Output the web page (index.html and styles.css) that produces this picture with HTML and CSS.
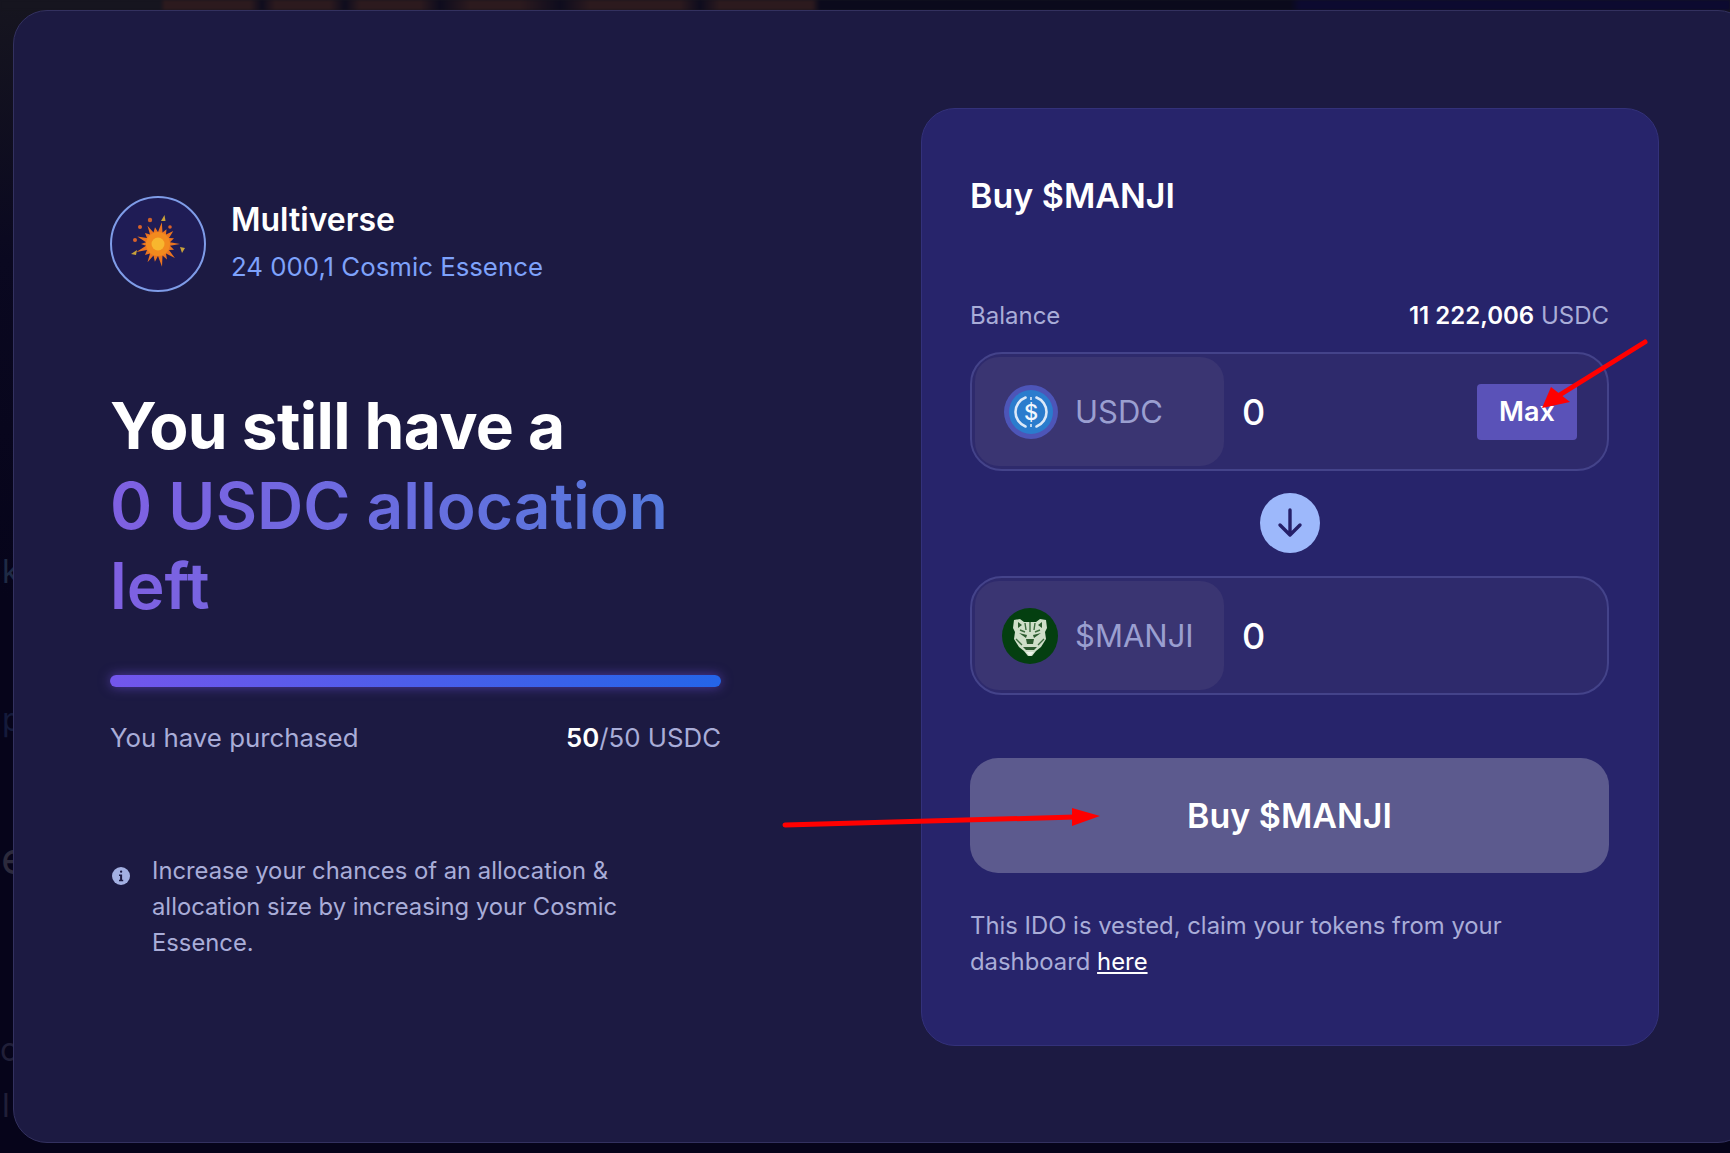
FILE: index.html
```html
<!DOCTYPE html>
<html lang="en">
<head>
    <meta charset="UTF-8">
    <meta name="viewport" content="width=device-width, initial-scale=1.0">
    <title>Buy $MANJI</title>
    <link rel="stylesheet" href="styles.css">
</head>
<body>
    <!-- page behind the modal, only its edges show -->
    <div class="backdrop">
        <div class="backdrop-top"></div>
        <span class="ghost ghost-k">k</span>
        <span class="ghost ghost-p">p</span>
        <span class="ghost ghost-e">e</span>
        <span class="ghost ghost-o">o</span>
        <span class="ghost ghost-l">l</span>
    </div>

    <div class="card">
        <div class="info">
            <div class="tier">
                <div class="tier-icon">
                    <svg class="sun" viewBox="-30 -30 60 60" width="60" height="60">
                        <polygon fill="#ea7420" points="22,0 12,1.7 16,5.8 11,6 16.9,14.1 8,9.5 9,15.6 4.5,11.5 4,22.7 0,12 -3.1,17.7 -4.5,11.5 -10.5,18.2 -8,9.5 -13,10.9 -11,6 -21.6,7.9 -12,1.7 -17,0 -12,-1.7 -20.7,-7.5 -11,-6 -13,-10.9 -8,-9.5 -10.5,-18.2 -4.5,-11.5 -3,-16.7 0,-12 3.8,-21.7 4.5,-11.5 8.5,-14.7 8,-9.5 15.3,-12.9 11,-6 16,-5.8 12,-1.7"/>
                        <circle r="12" fill="#f28a1e"/>
                        <circle r="6.5" fill="#f8b62e"/>
                        <circle cx="-8" cy="-24" r="2.2" fill="#c9602c"/>
                        <circle cx="-18" cy="-17" r="2" fill="#d9622a"/>
                        <circle cx="-23" cy="-4" r="2" fill="#d9622a"/>
                        <circle cx="12" cy="-17" r="1.8" fill="#d9622a"/>
                        <path d="M3 -23l3.5 -6 1 6z" fill="#c9a23a"/>
                        <path d="M-27 10l6 -4 -1 5z" fill="#c9a23a"/>
                        <path d="M22 3l5 1 -3 5z" fill="#c9a23a"/>
                    </svg>
                </div>
                <div class="tier-text">
                    <div class="tier-name">Multiverse</div>
                    <div class="tier-points">24 000,1 Cosmic Essence</div>
                </div>
            </div>

            <h1 class="headline">
                You still have a<br>
                <span class="accent">0 USDC allocation<br>left</span>
            </h1>

            <div class="progress"></div>
            <div class="progress-row">
                <span>You have purchased</span>
                <span><b>50</b>/50 USDC</span>
            </div>

            <div class="hint">
                <svg class="hint-icon" viewBox="0 0 18 18" width="18" height="18">
                    <circle cx="9" cy="9" r="9" fill="#a3b0e2"/>
                    <rect x="8" y="3.5" width="2.2" height="2.2" rx="1" fill="#1c1a42"/>
                    <path d="M7 7.6h3.1v5.2h1.1v1.4H7v-1.4h1.1V9H7z" fill="#1c1a42"/>
                </svg>
                <p>Increase your chances of an allocation &amp; allocation size by increasing your Cosmic Essence.</p>
            </div>
        </div>

        <div class="panel">
            <h2>Buy $MANJI</h2>

            <div class="balance">
                <span>Balance</span>
                <span><b>11 222,006</b> USDC</span>
            </div>

            <div class="field">
                <div class="token">
                    <svg viewBox="0 0 54 54" width="54" height="54">
                        <circle cx="27" cy="27" r="27" fill="#4d55b8"/>
                        <circle cx="27" cy="27" r="22" fill="#2b7ccd"/>
                        <path d="M21.5 12.5a15.5 15.5 0 0 0 0 29M32.5 12.5a15.5 15.5 0 0 1 0 29" fill="none" stroke="#dce9f8" stroke-width="2.6" stroke-linecap="round"/>
                        <path d="M27 12v3M27 39v3" stroke="#dce9f8" stroke-width="1.6"/>
                        <text x="27" y="34.5" text-anchor="middle" class="coin-sign">$</text>
                    </svg>
                    <span>USDC</span>
                </div>
                <span class="amount">0</span>
                <button class="max">Max</button>
            </div>

            <div class="swap">
                <svg viewBox="0 0 60 60" width="60" height="60">
                    <circle cx="30" cy="30" r="30" fill="#9db8fb"/>
                    <path d="M30 17v24M20 32l10 10 10-10" fill="none" stroke="#251f68" stroke-width="3.4" stroke-linecap="round" stroke-linejoin="round"/>
                </svg>
            </div>

            <div class="field">
                <div class="token">
                    <svg class="tiger" viewBox="0 0 56 56" width="56" height="56">
                        <circle cx="28" cy="28" r="28" fill="#043f10"/>
                        <path d="M12 12l6-1 4 3h12l4-3 6 1 1 8-2 4 1 7-5 8-5 4-4 5h-4l-4-5-5-4-5-8 1-7-2-4z" fill="#cfdfc9"/>
                        <path d="M16 14l4 3-4 3zM40 14l-4 3 4 3zM17 25l8 2-1 3zM39 25l-8 2 1 3zM24 31h8l-1 5h-6zM21 39h14l-3 3h-8z" fill="#2b5a2e"/>
                        <path d="M28 14v10M23 15l1 7M33 15l-1 7M14 31l6 6M42 31l-6 6M18 22l5 2M38 22l-5 2" stroke="#3d6b3f" stroke-width="1.4"/>
                        <path d="M24 44h8l-4 4z" fill="#eef5ea"/>
                    </svg>
                    <span>$MANJI</span>
                </div>
                <span class="amount">0</span>
            </div>

            <button class="buy">Buy $MANJI</button>

            <p class="note">This IDO is vested, claim your tokens from your dashboard <a href="#">here</a></p>
        </div>
    </div>

    <!-- red annotation arrows from the screenshot -->
    <svg class="annotation" viewBox="0 0 1730 1153" width="1730" height="1153">
        <path d="M1645 342L1558 396" stroke="#f00" stroke-width="5" stroke-linecap="round"/>
        <polygon points="1542,408 1551,387 1570,402" fill="#f00"/>
        <path d="M785 825L1075 817" stroke="#f00" stroke-width="5" stroke-linecap="round"/>
        <polygon points="1100,816 1072,808 1072,826" fill="#f00"/>
    </svg>
</body>
</html>
```

FILE: styles.css
```css
html, body {
    height: 100%;
}

body {
    margin: 0;
    overflow: hidden;
    background: linear-gradient(180deg, #16151f 0, #0a0820 260px, #06041a 600px);
    font-family: Inter, "Liberation Sans", sans-serif;
    color: #a9add8;
}

.backdrop {
    position: absolute;
    top: 0;
    left: 0;
    width: 100%;
    height: 100%;
    overflow: hidden;
}

.backdrop-top {
    height: 10px;
    filter: blur(1px);
    background: linear-gradient(90deg,
        #16151f 0, #16151f 160px,
        #2c1a1e 165px, #2c1a1e 250px, #0e0c1e 262px, #2c1a1e 275px, #2c1a1e 330px,
        #0e0c1e 345px, #2c1a1e 360px, #2c1a1e 420px, #0e0c1e 440px, #2c1a1e 470px, #2c1a1e 520px,
        #0e0c1e 560px, #2c1a1e 590px, #2c1a1e 680px, #0e0c1e 700px, #2c1a1e 720px, #2c1a1e 812px,
        #0b0a1c 820px, #0b0a1c 1290px, #0c0a30 1300px, #0c0a30 100%);
}

.ghost {
    position: absolute;
    left: 2px;
    font-size: 32px;
    line-height: 40px;
    color: #1e2a44;
}

.ghost-k { top: 552px; }
.ghost-p { top: 700px; color: #141a3a; }
.ghost-e { top: 838px; left: 1px; font-size: 44px; color: #2c2a3c; }
.ghost-o { top: 1030px; left: 0; color: #201f38; }
.ghost-l { top: 1086px; color: #201f38; }

.card {
    position: relative;
    box-sizing: border-box;
    display: flex;
    justify-content: space-between;
    width: 1739px;
    height: 1133px;
    margin: 10px 0 0 13px;
    padding: 97px 92px 0 96px;
    background: #1c1a42;
    border: 1px solid #33315f;
    border-radius: 34px;
}

.info {
    width: 611px;
    padding-top: 88px;
}

.tier {
    display: flex;
    align-items: center;
    gap: 25px;
}

.tier-icon {
    box-sizing: border-box;
    display: flex;
    align-items: center;
    justify-content: center;
    width: 96px;
    height: 96px;
    background: #1f1c55;
    border: 2px solid #7f9ce8;
    border-radius: 50%;
}

.sun {
    filter: blur(0.4px);
}

.tier-text {
    padding-bottom: 2px;
}

.tier-name {
    font-size: 32px;
    font-weight: 600;
    color: #fff;
    line-height: 40px;
}

.tier-points {
    margin-top: 7px;
    font-size: 25.8px;
    color: #7ea2fb;
    line-height: 40px;
}

.headline {
    margin: 94px 0 0;
    font-size: 64px;
    font-weight: 700;
    letter-spacing: -0.6px;
    line-height: 80px;
    color: #fff;
}

.accent {
    background: linear-gradient(90deg, #7f60e2, #5479dc 100%);
    background-size: 560px 100%;
    -webkit-background-clip: text;
    background-clip: text;
    color: transparent;
    font-weight: 600;
    letter-spacing: 0;
}

.progress {
    height: 12px;
    margin-top: 49px;
    border-radius: 6px;
    background: linear-gradient(90deg, #7356ec, #2465e8);
    box-shadow: 0 0 12px rgba(124, 88, 240, 0.55);
}

.progress-row {
    display: flex;
    justify-content: space-between;
    margin-top: 31px;
    font-size: 25.8px;
    line-height: 40px;
}

.progress-row b {
    color: #fff;
    font-weight: 600;
}

.hint {
    display: flex;
    gap: 22px;
    margin-top: 95px;
}

.hint-icon {
    flex: none;
    margin-top: 14px;
    margin-left: 2px;
}

.hint p {
    width: 480px;
    margin: 0;
    font-size: 23.8px;
    line-height: 36px;
}

.panel {
    box-sizing: border-box;
    width: 738px;
    height: 938px;
    padding: 0 49px 0 48px;
    background: #27246b;
    border: 1px solid #33317a;
    border-radius: 34px;
}

.panel h2 {
    margin: 62px 0 0;
    font-size: 34px;
    font-weight: 600;
    line-height: 50px;
    color: #fff;
}

.balance {
    display: flex;
    justify-content: space-between;
    margin-top: 75px;
    font-size: 24px;
    line-height: 40px;
}

.balance b {
    color: #fff;
    font-weight: 600;
}

.field {
    box-sizing: border-box;
    display: flex;
    align-items: center;
    height: 119px;
    margin-top: 16px;
    padding: 3px;
    background: #2e2a6c;
    border: 2px solid #44438a;
    border-radius: 32px;
}

.token {
    display: flex;
    align-items: center;
    gap: 17px;
    box-sizing: border-box;
    width: 249px;
    height: 100%;
    padding-left: 29px;
    background: #3a3572;
    border-radius: 24px;
    font-size: 31px;
    color: #9a9fd0;
}

.tiger {
    margin-left: -2px;
}

.coin-sign {
    font-family: Inter, sans-serif;
    font-size: 22px;
    font-weight: 500;
    fill: #f2f7fd;
}

.amount {
    margin-left: 18px;
    font-size: 36px;
    font-weight: 500;
    color: #fff;
}

.max {
    width: 100px;
    height: 56px;
    margin-left: auto;
    margin-right: 27px;
    padding: 0;
    border: 0;
    border-radius: 4px;
    background: #5a52b8;
    font-family: inherit;
    font-size: 27px;
    font-weight: 600;
    color: #fff;
}

.swap {
    display: flex;
    justify-content: center;
    margin: 22px 0 23px;
}

.swap + .field {
    margin-top: 0;
}

.buy {
    display: block;
    width: 100%;
    height: 115px;
    margin-top: 63px;
    border: 0;
    border-radius: 28px;
    background: #5c5a8e;
    font-family: inherit;
    font-size: 34px;
    font-weight: 600;
    color: #fff;
}

.note {
    margin: 35px 0 0;
    font-size: 23.85px;
    line-height: 36px;
}

.note a {
    color: #fff;
}

.annotation {
    position: absolute;
    top: 0;
    left: 0;
}
```
